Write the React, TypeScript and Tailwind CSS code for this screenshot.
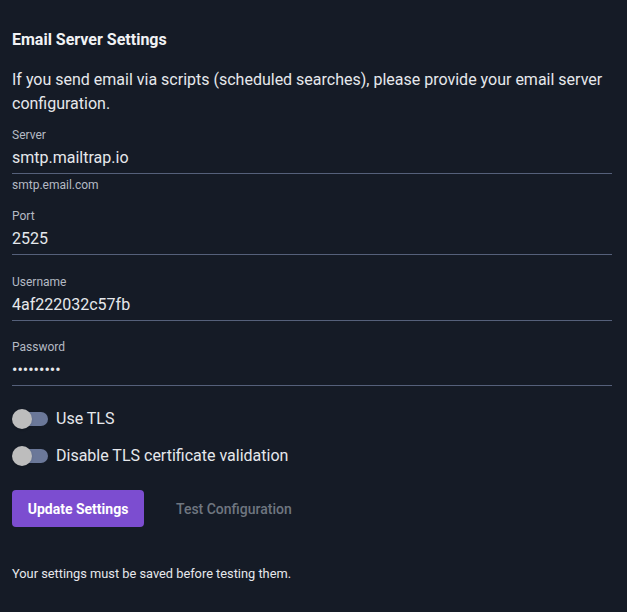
import React, { useState } from 'react';

type FieldProps = {
  label: string;
  value: string;
  type?: string;
  helper?: string;
  className?: string;
};

const Field: React.FC<FieldProps> = ({ label, value, type = 'text', helper, className = '' }) => {
  const [val, setVal] = useState(value);
  return (
    <div className={`flex flex-col ${className}`}>
      <label className="text-xs leading-4 text-[#b4bac4]">{label}</label>
      <input
        type={type}
        value={val}
        onChange={(e) => setVal(e.target.value)}
        className="mt-[3px] h-7 border-b border-[#55607a] bg-transparent pb-1 text-base leading-6 text-[#e6e8ec] outline-none"
      />
      {helper && <p className="mt-[3px] text-xs leading-4 text-[#b4bac4]">{helper}</p>}
    </div>
  );
};

const Toggle: React.FC<{ label: string; className?: string }> = ({ label, className = '' }) => {
  const [on, setOn] = useState(false);
  return (
    <label className={`flex h-6 cursor-pointer items-center ${className}`} onClick={() => setOn(!on)}>
      <span className="relative flex h-5 w-9 items-center">
        <span className="ml-[2px] h-[14px] w-[34px] rounded-full bg-[#6b7899]" />
        <span
          className={`absolute top-0 h-5 w-5 rounded-full bg-[#bdbdbd] shadow ${on ? 'left-4' : 'left-0'}`}
        />
      </span>
      <span className="ml-2 text-base text-[#e6e8ec]">{label}</span>
    </label>
  );
};

const App: React.FC = () => {
  return (
    <div className="min-h-screen bg-[#151b26] px-3 pt-[28px] font-['Roboto',sans-serif]">
      <div className="w-[600px]">
        <h2 className="text-base font-bold leading-6 text-[#f1f2f4]">Email Server Settings</h2>
        <p className="mt-4 text-base leading-6 text-[#e6e8ec]">
          If you send email via scripts (scheduled searches), please provide your email server configuration.
        </p>

        <Field className="mt-[11px]" label="Server" value="smtp.mailtrap.io" helper="smtp.email.com" />
        <Field className="mt-[15px]" label="Port" value="2525" />
        <Field className="mt-[19px]" label="Username" value="4af222032c57fb" />
        <Field className="mt-[18px]" label="Password" value="fakepassw" type="password" />

        <Toggle className="mt-[21px]" label="Use TLS" />
        <Toggle className="mt-[13px]" label="Disable TLS certificate validation" />

        <div className="mt-[22px] flex items-center">
          <button className="h-[37px] w-[132px] rounded bg-[#7c4dd0] text-sm font-bold text-white">
            Update Settings
          </button>
          <button className="ml-4 px-4 text-sm font-medium text-[#6f7680]">Test Configuration</button>
        </div>

        <p className="mt-[37px] text-[12.8px] text-[#e6e8ec]">Your settings must be saved before testing them.</p>
      </div>
    </div>
  );
};

export default App;
